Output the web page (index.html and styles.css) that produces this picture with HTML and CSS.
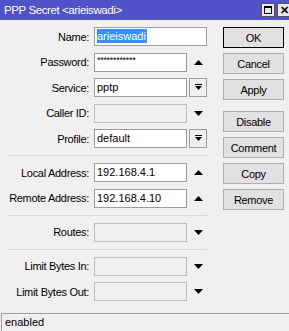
FILE: index.html
```html
<!DOCTYPE html>
<html lang="en">
<head>
    <meta charset="UTF-8">
    <title>PPP Secret</title>
    <link rel="stylesheet" href="styles.css">
</head>
<body>
  <div class="window">
    <div class="titlebar">
        <span class="title">PPP Secret &lt;arieiswadi&gt;</span>
        <div class="title-buttons">
            <span class="tbtn"><span class="max-icon"></span></span>
            <span class="tbtn close">&#x2715;</span>
        </div>
    </div>

    <div class="content">
        <div class="form">
            <div class="group">
                <div class="row">
                    <label>Name:</label>
                    <div class="field wide"><span class="selected">arieiswadi</span></div>
                </div>
                <div class="row">
                    <label>Password:</label>
                    <div class="field"><span class="secret">************</span></div>
                    <span class="side"><svg width="9" height="5" viewBox="0 0 9 5"><polygon points="0,5 9,5 4.5,0" fill="#000"/></svg></span>
                </div>
                <div class="row">
                    <label>Service:</label>
                    <div class="field">pptp</div>
                    <span class="side dropbtn"><svg width="7" height="7" viewBox="0 0 7 7"><rect x="0" y="0" width="7" height="1" fill="#000"/><polygon points="0,2 7,2 3.5,6" fill="#000"/></svg></span>
                </div>
                <div class="row">
                    <label>Caller ID:</label>
                    <div class="field disabled"></div>
                    <span class="side"><svg width="9" height="5" viewBox="0 0 9 5"><polygon points="0,0 9,0 4.5,5" fill="#000"/></svg></span>
                </div>
                <div class="row">
                    <label>Profile:</label>
                    <div class="field">default</div>
                    <span class="side dropbtn"><svg width="7" height="7" viewBox="0 0 7 7"><rect x="0" y="0" width="7" height="1" fill="#000"/><polygon points="0,2 7,2 3.5,6" fill="#000"/></svg></span>
                </div>
            </div>

            <div class="sep"></div>

            <div class="group">
                <div class="row">
                    <label>Local Address:</label>
                    <div class="field">192.168.4.1</div>
                    <span class="side"><svg width="9" height="5" viewBox="0 0 9 5"><polygon points="0,5 9,5 4.5,0" fill="#000"/></svg></span>
                </div>
                <div class="row">
                    <label>Remote Address:</label>
                    <div class="field">192.168.4.10</div>
                    <span class="side"><svg width="9" height="5" viewBox="0 0 9 5"><polygon points="0,5 9,5 4.5,0" fill="#000"/></svg></span>
                </div>
            </div>

            <div class="sep"></div>

            <div class="group">
                <div class="row">
                    <label>Routes:</label>
                    <div class="field disabled"></div>
                    <span class="side"><svg width="9" height="5" viewBox="0 0 9 5"><polygon points="0,0 9,0 4.5,5" fill="#000"/></svg></span>
                </div>
            </div>

            <div class="sep"></div>

            <div class="group">
                <div class="row">
                    <label>Limit Bytes In:</label>
                    <div class="field disabled"></div>
                    <span class="side"><svg width="9" height="5" viewBox="0 0 9 5"><polygon points="0,0 9,0 4.5,5" fill="#000"/></svg></span>
                </div>
                <div class="row">
                    <label>Limit Bytes Out:</label>
                    <div class="field disabled"></div>
                    <span class="side"><svg width="9" height="5" viewBox="0 0 9 5"><polygon points="0,0 9,0 4.5,5" fill="#000"/></svg></span>
                </div>
            </div>
        </div>

        <div class="buttons">
            <button class="default">OK</button>
            <button>Cancel</button>
            <button>Apply</button>
            <button class="spaced">Disable</button>
            <button>Comment</button>
            <button>Copy</button>
            <button>Remove</button>
        </div>
    </div>

    <div class="statusbar">enabled</div>
  </div>
</body>
</html>
```

FILE: styles.css
```css
body {
    margin: 0;
    font-family: "Liberation Sans", Arial, sans-serif;
    font-size: 11px;
    background: #f0f0f0;
}

.window {
    width: 289px;
    height: 331px;
    display: flex;
    flex-direction: column;
    overflow: hidden;
    background: #f0f0f0;
}

.titlebar {
    height: 20px;
    background: #5151c9;
    display: flex;
    align-items: center;
    justify-content: space-between;
    flex-shrink: 0;
}

.title {
    color: #fff;
    padding-left: 4px;
    font-size: 11.5px;
    letter-spacing: -0.4px;
}

.title-buttons {
    display: flex;
    gap: 2px;
    margin-right: -2px;
}

.tbtn {
    width: 14px;
    height: 14px;
    box-sizing: border-box;
    background: #e8e8e8;
    border: 1px solid #555;
    display: flex;
    align-items: center;
    justify-content: center;
    font-size: 11px;
    font-weight: bold;
    color: #000;
}

.max-icon {
    width: 8px;
    height: 8px;
    box-sizing: border-box;
    border: 1px solid #000;
    border-top-width: 2px;
}

.content {
    display: flex;
    padding-top: 7px;
}

.form {
    display: flex;
    flex-direction: column;
    padding-left: 8px;
    width: 199px;
}

.group {
    display: flex;
    flex-direction: column;
    gap: 6.5px;
}

.sep {
    height: 1px;
    background: #d9d9d9;
    margin: 7px 0 7px 0;
}

.row {
    display: flex;
    align-items: center;
    height: 19px;
}

.row label {
    width: 81px;
    margin-right: 5px;
    text-align: right;
    letter-spacing: -0.3px;
    color: #000;
}

.field {
    width: 93px;
    height: 19px;
    box-sizing: border-box;
    background: #fff;
    border: 1px solid #9c9c9c;
    padding: 0 2px;
    line-height: 17px;
    white-space: nowrap;
    overflow: hidden;
}

.field.wide {
    width: 113px;
}

.field.disabled {
    background: #f0f0f0;
    border-color: #bcbcbc;
}

.selected {
    background: #3390ff;
    color: #fff;
    display: inline-block;
    line-height: 14px;
    padding-right: 1px;
}

.secret {
    display: inline-block;
    font-size: 9px;
    letter-spacing: -0.3px;
    line-height: 9px;
    vertical-align: top;
    margin-top: 2px;
}

.side {
    width: 18px;
    height: 19px;
    margin-left: 2px;
    box-sizing: border-box;
    display: flex;
    align-items: center;
    justify-content: center;
}

.side.dropbtn {
    border: 1px solid #9c9c9c;
    background: #f0f0f0;
}

.buttons {
    display: flex;
    flex-direction: column;
    gap: 5px;
    margin-left: 16px;
}

button {
    width: 61px;
    height: 21px;
    box-sizing: border-box;
    background: #e1e1e1;
    border: 1px solid #adadad;
    font-family: "Liberation Sans", Arial, sans-serif;
    font-size: 11px;
    letter-spacing: -0.3px;
    color: #000;
    padding: 0;
}

button.default {
    border: 1px solid #000;
}

button.spaced {
    margin-top: 6px;
}

.statusbar {
    margin-top: auto;
    margin-left: 1px;
    height: 18px;
    box-sizing: border-box;
    border-top: 1px solid #a0a0a0;
    border-left: 1px solid #a0a0a0;
    padding-left: 3px;
    line-height: 17px;
    font-size: 11px;
}
```
